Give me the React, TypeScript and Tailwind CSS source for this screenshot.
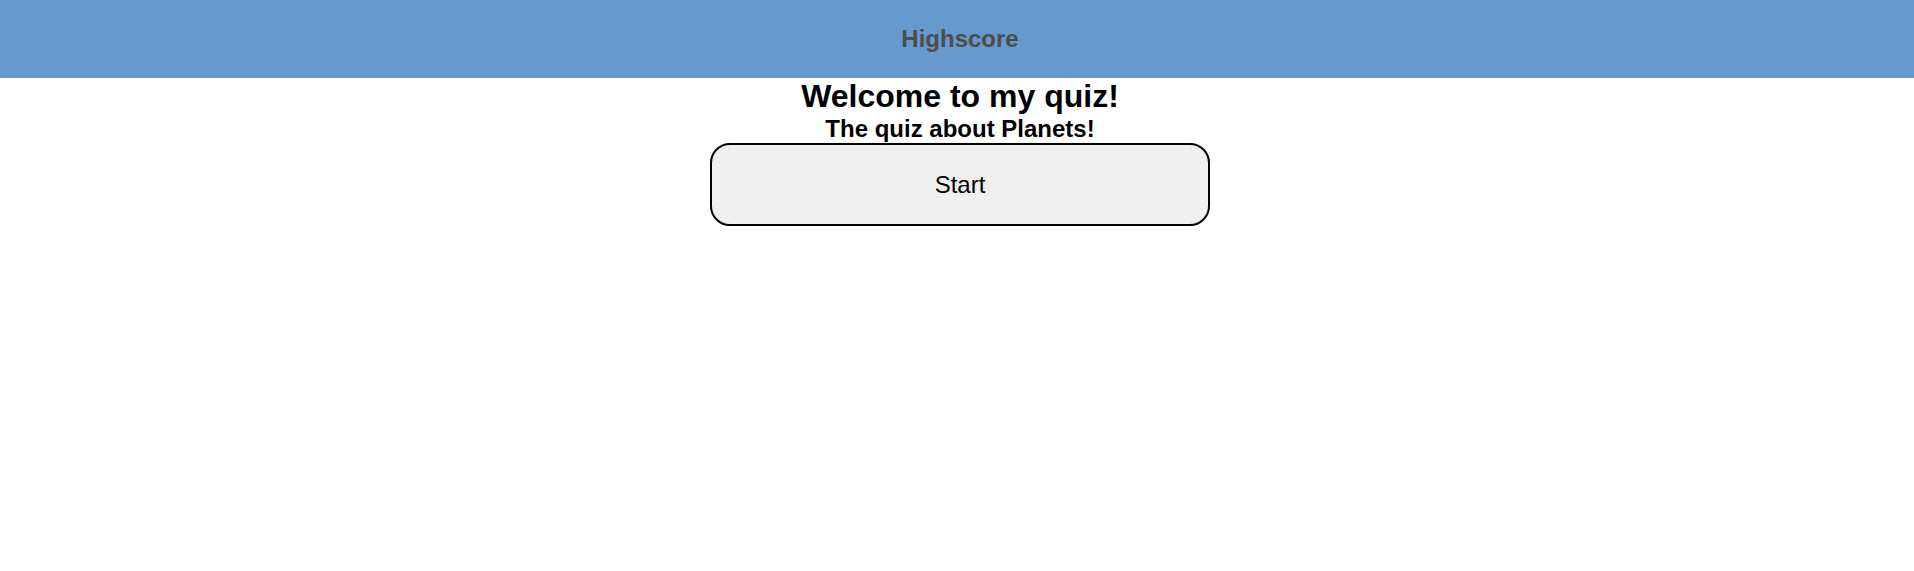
export default function App() {
  return (
    <div className="min-h-screen bg-white font-['Liberation_Sans',Arial,sans-serif]">
      <header className="h-[78px] bg-[#6699cc] flex items-center justify-center pl-[6px]">
        <span className="text-2xl font-bold text-[#4d4d4d]">Highscore</span>
      </header>
      <main className="flex flex-col items-center pl-[6px]">
        <h1 className="text-[32px] leading-[37px] font-bold text-black">Welcome to my quiz!</h1>
        <h2 className="text-2xl leading-[28px] font-bold text-black">The quiz about Planets!</h2>
        <button className="w-[500px] h-[83px] rounded-[20px] border-2 border-black bg-[#efefef] text-2xl text-black">
          Start
        </button>
      </main>
    </div>
  )
}
